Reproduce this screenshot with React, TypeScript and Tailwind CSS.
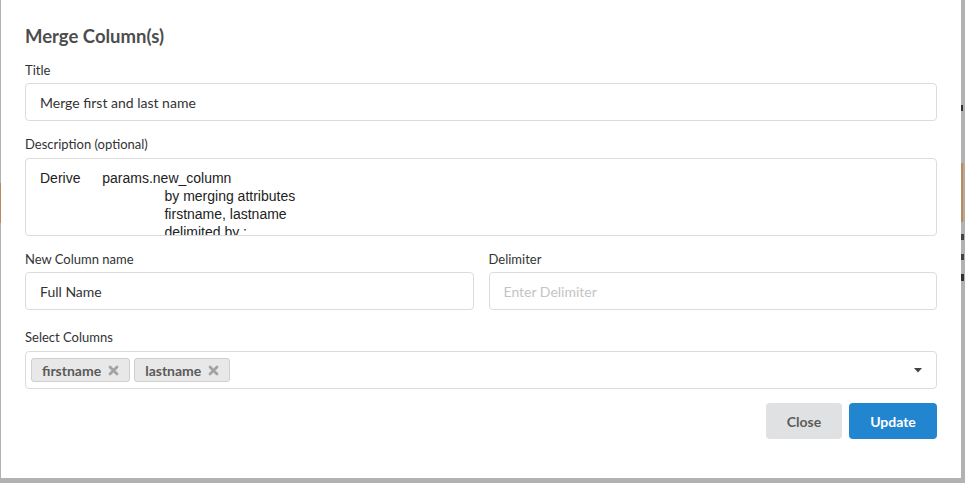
import * as React from 'react';

const lato = { fontFamily: 'Lato, "Liberation Sans", sans-serif' };

const TagX = () => (
  <svg width="11" height="11" viewBox="0 0 11 11" className="shrink-0">
    <path d="M2 2 L9 9 M9 2 L2 9" stroke="#a3a3a3" strokeWidth="2.8" strokeLinecap="round" />
  </svg>
);

const Tag = ({ label }: { label: string }) => (
  <div className="flex h-6 items-center gap-[7px] rounded-[3px] border border-[#cfcfcf] bg-[#e8e8e8] pl-[10px] pr-[10px] text-[14px] font-bold text-[#5a5a5a]">
    <span>{label}</span>
    <TagX />
  </div>
);

const Label = ({ children, className = '' }: { children: React.ReactNode; className?: string }) => (
  <div className={`text-[13px] leading-[18px] text-[#333] ${className}`}>{children}</div>
);

const inputCls =
  'flex h-[38px] items-center rounded-[4px] border border-[#dcdcdc] bg-white px-[14px] text-[14px]';

export default function App() {
  const description =
    'Derive\tparams.new_column\n\t\t\t\tby merging attributes\n\t\t\t\tfirstname, lastname\n\t\t\t\tdelimited by :';

  return (
    <div className="flex h-[483px] w-[965px] overflow-hidden bg-[#b2b2b2]" style={lato}>
      {/* backdrop sliver, left */}
      <div className="flex w-px shrink-0 flex-col">
        <div className="h-[183px]" />
        <div className="h-[40px] bg-[#b98a5e]" />
      </div>

      {/* modal */}
      <div className="flex h-[478px] w-[960px] shrink-0 flex-col bg-white px-6 pt-6">
        <div className="h-6 text-[18.5px] font-bold leading-6 text-[#4d4d4d]">Merge Column(s)</div>

        <Label className="mt-[13px]">Title</Label>
        <div className={`${inputCls} mt-1 text-[#333]`}>Merge first and last name</div>

        <Label className="mt-[14px]">Description (optional)</Label>
        <div
          className="mt-[5px] h-[78px] overflow-hidden rounded-[4px] border border-[#dcdcdc] px-[14px] pt-[10px] text-[14px] leading-[18px] whitespace-pre text-[#222] [tab-size:8]"
          style={{ fontFamily: '"Liberation Sans", Arial, sans-serif' }}
        >
          {description}
        </div>

        <div className="mt-[14px] grid grid-cols-2 gap-[15px]">
          <div className="flex flex-col">
            <Label>New Column name</Label>
            <div className={`${inputCls} mt-1 text-[#333]`}>Full Name</div>
          </div>
          <div className="flex flex-col">
            <Label>Delimiter</Label>
            <div className={`${inputCls} mt-1 text-[#c4c4c4]`}>Enter Delimiter</div>
          </div>
        </div>

        <Label className="mt-[18px]">Select Columns</Label>
        <div className="mt-[5px] flex h-[38px] items-center gap-1 rounded-[4px] border border-[#dcdcdc] pl-[5px] pr-[14px]">
          <Tag label="firstname" />
          <Tag label="lastname" />
          <div className="flex-1" />
          <svg width="8" height="5" viewBox="0 0 8 5">
            <path d="M0 0 L8 0 L4 4.5 Z" fill="#444" />
          </svg>
        </div>

        <div className="mt-[14px] flex justify-end gap-[7px]">
          <button className="h-[36px] w-[76px] rounded-[4px] bg-[#e0e1e2] text-[14px] font-bold text-[#5c5c5c]">
            Close
          </button>
          <button className="h-[36px] w-[88px] rounded-[4px] bg-[#2185d0] text-[14px] font-bold text-white">
            Update
          </button>
        </div>
      </div>

      {/* backdrop sliver, right */}
      <div className="flex flex-1 flex-col">
        <div className="h-[105px]" />
        <div className="h-[6px] w-[2px] bg-[#333]" />
        <div className="h-[52px]" />
        <div className="h-[59px] border-l-2 border-[#b98a5e] bg-[#b5aa9e]" />
        <div className="h-[12px]" />
        <div className="h-[6px] w-[3px] bg-[#444]" />
        <div className="h-[14px]" />
        <div className="h-[6px] w-[3px] bg-[#444]" />
        <div className="h-[14px]" />
        <div className="h-[7px] w-[3px] bg-[#333]" />
      </div>
    </div>
  );
}
